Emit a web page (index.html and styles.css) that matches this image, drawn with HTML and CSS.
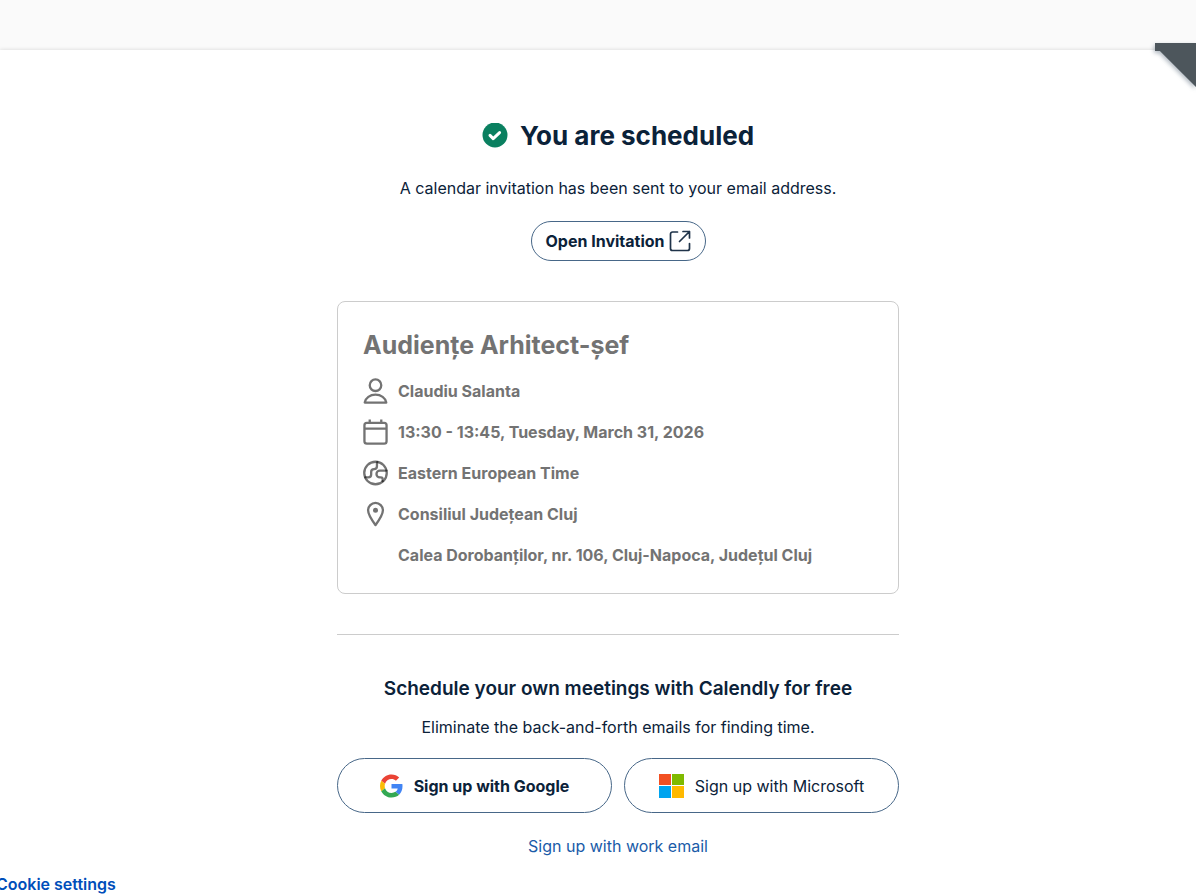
FILE: index.html
```html
<!DOCTYPE html>
<html lang="en">

<head>
  <meta charset="UTF-8">
  <meta name="viewport" content="width=device-width, initial-scale=1.0">
  <title>You are scheduled</title>
  <link rel="stylesheet" href="styles.css">
</head>

<body>
  <div class="page">
    <div class="ribbon"></div>
    <main class="content">
      <div class="title">
        <svg width="26" height="26" viewBox="0 0 26 26" aria-hidden="true">
          <circle cx="13" cy="12" r="12.5" fill="#0a8060" />
          <path d="M8 12.400l3.200 3.200 6.400-6" fill="none" stroke="#fff" stroke-width="3" stroke-linecap="round" stroke-linejoin="round" />
        </svg>
        <h1>You are scheduled</h1>
      </div>
      <p class="sent">A calendar invitation has been sent to your email address.</p>
      <button class="open-btn" type="button">
        Open Invitation
        <svg width="22" height="22" viewBox="0 0 22 22" fill="none" stroke="#1f3349" stroke-width="1.7" stroke-linecap="round" stroke-linejoin="round" aria-hidden="true">
          <path d="M8.500 2H3.500a2 2 0 0 0-2 2v14.500a2 2 0 0 0 2 2h15a2 2 0 0 0 2-2v-5" />
          <path d="M14 1.500h6.500V8M20.500 1.500L10.500 11.500" />
        </svg>
      </button>

      <section class="event">
        <h2>Audiențe Arhitect-șef</h2>
        <ul>
          <li>
            <svg class="icon" viewBox="0 0 26 26" aria-hidden="true">
              <circle cx="13" cy="7" r="6" />
              <path d="M1.800 25a11.300 9.500 0 0 1 22.400 0z" />
            </svg>
            <span>Claudiu Salanta</span>
          </li>
          <li>
            <svg class="icon" viewBox="0 0 26 26" aria-hidden="true">
              <rect x="1.500" y="3.500" width="23" height="21.500" rx="2.500" />
              <path d="M1.500 9.500h23M7 0v4M19 0v4" />
            </svg>
            <span>13:30 - 13:45, Tuesday, March 31, 2026</span>
          </li>
          <li>
            <svg class="icon" viewBox="0 0 26 26" aria-hidden="true">
              <circle cx="13" cy="13" r="11.700" />
              <path d="M2 17.500h3.500a3 3 0 0 0 3-3v-2.500a3 3 0 0 1 3-3 3 3 0 0 0 3-3V1.500" />
              <path d="M24.500 10.500h-7a3.500 3.500 0 0 0 0 7h1a2 2 0 0 1 2 2v2" />
              <g class="dots">
                <circle cx="2.500" cy="17.500" r="1.200" />
                <circle cx="14.800" cy="1.700" r="1.200" />
                <circle cx="24.200" cy="10.500" r="1.200" />
                <circle cx="20.500" cy="21.500" r="1.200" />
              </g>
            </svg>
            <span>Eastern European Time</span>
          </li>
          <li>
            <svg class="icon" viewBox="0 0 26 26" aria-hidden="true">
              <path d="M13 1.500a7.700 7.700 0 0 1 7.700 7.700c0 5-4.500 11-7.700 15.300-3.200-4.300-7.700-10.300-7.700-15.300A7.700 7.700 0 0 1 13 1.500z" />
              <circle class="pin-dot" cx="13" cy="9.200" r="2.600" />
            </svg>
            <span>Consiliul Județean Cluj</span>
          </li>
          <li class="address">
            <span>Calea Dorobanților, nr. 106, Cluj-Napoca, Județul Cluj</span>
          </li>
        </ul>
      </section>

      <section class="signup">
        <h3>Schedule your own meetings with Calendly for free</h3>
        <p>Eliminate the back-and-forth emails for finding time.</p>
        <div class="signup-buttons">
          <button class="signup-btn google" type="button">
            <svg width="23" height="24" viewBox="0 0 48 48" aria-hidden="true">
              <path fill="#ea4335" d="M24 9.500c3.540 0 6.710 1.220 9.210 3.600l6.850-6.850C35.900 2.380 30.470 0 24 0 14.620 0 6.510 5.380 2.560 13.220l7.980 6.190C12.430 13.720 17.740 9.500 24 9.500z" />
              <path fill="#4285f4" d="M46.980 24.550c0-1.570-.15-3.090-.38-4.550H24v9.020h12.940c-.58 2.960-2.260 5.480-4.780 7.180l7.730 6c4.510-4.180 7.090-10.360 7.090-17.650z" />
              <path fill="#fbbc05" d="M10.530 28.590c-.48-1.450-.76-2.990-.76-4.590s.27-3.140.76-4.590l-7.980-6.190C.92 16.460 0 20.120 0 24c0 3.880.92 7.540 2.560 10.780l7.970-6.190z" />
              <path fill="#34a853" d="M24 48c6.480 0 11.930-2.130 15.890-5.810l-7.730-6c-2.150 1.450-4.920 2.300-8.160 2.300-6.260 0-11.570-4.220-13.470-9.910l-7.980 6.190C6.510 42.620 14.620 48 24 48z" />
            </svg>
            Sign up with Google
          </button>
          <button class="signup-btn" type="button">
            <svg width="25" height="26" viewBox="0 0 25 26" aria-hidden="true">
              <path fill="#f25022" d="M0 1h12v11H0z" />
              <path fill="#7fba00" d="M13 1h12v11H13z" />
              <path fill="#00a4ef" d="M0 13h12v12H0z" />
              <path fill="#ffb900" d="M13 13h12v12H13z" />
            </svg>
            Sign up with Microsoft
          </button>
        </div>
        <a class="work-email" href="#">Sign up with work email</a>
      </section>
    </main>
    <a class="cookie" href="#">Cookie settings</a>
  </div>
</body>

</html>
```

FILE: styles.css
```css
* {
  box-sizing: border-box;
}

body {
  display: flex;
  flex-direction: column;
  min-height: 100vh;
  margin: 0;
  padding-top: 50px;
  background: #fafafa;
  color: #0b2239;
  font-family: Inter, "Liberation Sans", sans-serif;
  font-size: 16px;
  line-height: 24px;
}

h1, h2, h3, p, ul {
  margin: 0;
  padding: 0;
}

.page {
  position: relative;
  flex: 1;
  padding: 68px 0 0 40px;
  background: #fff;
  box-shadow: 0 0 4px rgba(0, 0, 0, 0.15);
}

/* corner banner, folds off the right side */
.ribbon {
  position: absolute;
  top: -7px;
  right: 0;
  width: 41px;
  height: 52px;
  overflow: hidden;
  filter: drop-shadow(-1px 2px 2px rgba(60, 80, 100, 0.4));
}

.ribbon::before {
  content: "";
  display: block;
  height: 44px;
  background: #4d565c;
  clip-path: polygon(0 0, 100% 0, 100% 100%, 12% 18%, 0 18%);
}

.content {
  display: flex;
  flex-direction: column;
  align-items: center;
  width: 562px;
  max-width: 100%;
  margin: 0 auto;
}

.title {
  display: flex;
  align-items: center;
  gap: 12px;
}

h1 {
  font-size: 26px;
  line-height: 36px;
}

.sent {
  margin-top: 22px;
}

button {
  display: flex;
  align-items: center;
  justify-content: center;
  background: #fff;
  border: 1px solid #476788;
  border-radius: 40px;
  color: inherit;
  font: inherit;
  cursor: pointer;
}

.open-btn {
  gap: 4px;
  height: 40px;
  margin-top: 21px;
  padding: 0 14px;
  font-weight: 700;
}

.event {
  width: 100%;
  margin-top: 40px;
  padding: 25px;
  border: 1px solid #ccc;
  border-radius: 8px;
  color: #737373;
  font-weight: 700;
}

h2 {
  font-size: 25px;
  line-height: 36px;
}

ul {
  display: grid;
  gap: 15px;
  margin-top: 15px;
  list-style: none;
}

li {
  display: flex;
  align-items: center;
  gap: 10px;
  height: 26px;
}

.address {
  padding-left: 35px;
}

.icon {
  flex: none;
  width: 25px;
  height: 26px;
  fill: none;
  stroke: #737373;
  stroke-width: 2.4;
  stroke-linejoin: round;
}

.dots {
  fill: #333;
  stroke: none;
}

.pin-dot {
  fill: #737373;
  stroke: none;
}

.signup {
  width: 100%;
  margin-top: 40px;
  padding-top: 42px;
  border-top: 1px solid #ccc;
  text-align: center;
}

h3 {
  font-size: 19px;
  font-weight: 600;
  line-height: 24px;
}

.signup p {
  margin-top: 14px;
}

.signup-buttons {
  display: flex;
  gap: 12px;
  margin: 19px 0 21px;
}

.signup-btn {
  flex: 1;
  gap: 11px;
  height: 55px;
}

.google {
  font-weight: 700;
}

a {
  color: #004eba;
  text-decoration: none;
}

.work-email {
  color: #1a5ba8;
}

/* slides a little under the left edge */
.cookie {
  display: block;
  margin: 14px 0 0 -44px;
  font-weight: 600;
}
```
